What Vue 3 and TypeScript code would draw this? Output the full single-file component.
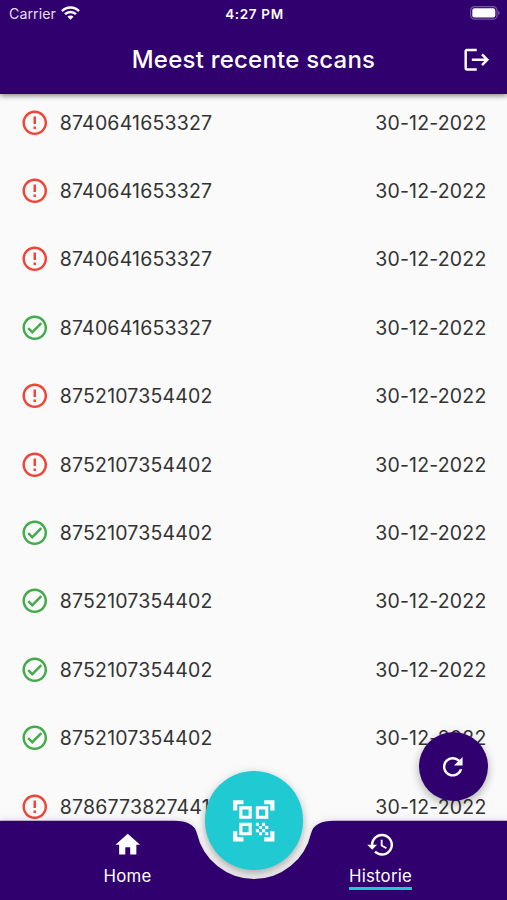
<script setup lang="ts">
type Status = 'error' | 'ok'

interface Scan {
  code: string
  date: string
  status: Status
}

const date = '30-12-2022'
const scans: Scan[] = [
  { code: '8740641653327', date, status: 'error' },
  { code: '8740641653327', date, status: 'error' },
  { code: '8740641653327', date, status: 'error' },
  { code: '8740641653327', date, status: 'ok' },
  { code: '8752107354402', date, status: 'error' },
  { code: '8752107354402', date, status: 'error' },
  { code: '8752107354402', date, status: 'ok' },
  { code: '8752107354402', date, status: 'ok' },
  { code: '8752107354402', date, status: 'ok' },
  { code: '8752107354402', date, status: 'ok' },
  { code: '8786773827441', date, status: 'error' },
]

const statusPaths: Record<Status, string> = {
  error:
    'M11 15h2v2h-2zm0-8h2v6h-2zm.99-5C6.47 2 2 6.48 2 12s4.47 10 9.99 10C17.52 22 22 17.52 22 12S17.52 2 11.99 2zM12 20c-4.42 0-8-3.58-8-8s3.58-8 8-8 8 3.58 8 8-3.58 8-8 8z',
  ok: 'M16.59 7.58L10 14.17l-2.59-2.58L6 13l4 4 8-8zM12 2C6.48 2 2 6.48 2 12s4.48 10 10 10 10-4.48 10-10S17.52 2 12 2zm0 18c-4.42 0-8-3.58-8-8s3.58-8 8-8 8 3.58 8 8-3.58 8-8 8z',
}
</script>

<template>
  <div class="app">
    <header class="header">
      <div class="status-bar">
        <div class="carrier">
          <span class="carrier-name">Carrier</span>
          <svg class="wifi" viewBox="0 0 19 14">
            <path d="M1 5.100a12 12 0 0 1 17 0M4 8.200a7.800 7.800 0 0 1 11 0" />
            <path class="wifi-dot" d="M9.500 13.800l-3-3.100a4.200 4.200 0 0 1 6 0z" />
          </svg>
        </div>
        <span class="time">4:27 PM</span>
        <div class="battery-box">
          <svg class="battery" viewBox="0 0 30 14">
            <rect class="battery-case" x=".6" y=".6" width="26.4" height="12.6" rx="4" />
            <rect class="battery-fill" x="2.300" y="2.300" width="23" height="9.200" rx="2.200" />
            <path class="battery-tip" d="M28.200 4.700c1.800.6 1.800 3.800 0 4.400z" />
          </svg>
        </div>
      </div>
      <div class="title-bar">
        <h1 class="title">Meest recente scans</h1>
        <button class="logout" aria-label="Uitloggen">
          <svg class="icon" viewBox="0 0 24 24">
            <path d="M17 7l-1.41 1.41L18.17 11H8v2h10.17l-2.58 2.58L17 17l5-5zM4 5h8V3H4c-1.1 0-2 .9-2 2v14c0 1.1.9 2 2 2h8v-2H4V5z" />
          </svg>
        </button>
      </div>
    </header>

    <main class="list">
      <div v-for="(scan, i) in scans" :key="i" class="row">
        <svg class="icon status" :class="scan.status" viewBox="0 0 24 24">
          <path :d="statusPaths[scan.status]" />
        </svg>
        <span class="code">{{ scan.code }}</span>
        <span class="date">{{ scan.date }}</span>
      </div>
    </main>

    <button class="refresh" aria-label="Vernieuwen">
      <svg class="icon" viewBox="0 0 24 24">
        <path d="M17.65 6.35C16.2 4.9 14.21 4 12 4c-4.42 0-7.99 3.58-7.99 8s3.57 8 7.99 8c3.73 0 6.84-2.55 7.73-6h-2.08c-.82 2.33-3.04 4-5.65 4-3.31 0-6-2.69-6-6s2.69-6 6-6c1.66 0 3.14.69 4.22 1.78L13 11h7V4l-2.35 2.35z" />
      </svg>
    </button>

    <nav class="nav">
      <svg class="nav-shape" viewBox="0 0 507 80">
        <path d="M0 .7H174Q194 .7 196.900 13.2A58.500 58.500 0 0 0 311.100 13.2Q314 .7 334 .7H507V80H0Z" />
      </svg>
      <a class="tab">
        <svg class="icon" viewBox="0 0 24 24"><path d="M10 20v-6h4v6h5v-8h3L12 3 2 12h3v8z" /></svg>
        <span class="tab-label">Home</span>
      </a>
      <a class="tab active">
        <svg class="icon" viewBox="0 0 24 24">
          <path d="M13 3c-4.97 0-9 4.03-9 9H1l3.89 3.89.07.14L9 12H6c0-3.87 3.13-7 7-7s7 3.13 7 7-3.13 7-7 7c-1.93 0-3.68-.79-4.94-2.06l-1.42 1.42C8.27 19.99 10.51 21 13 21c4.97 0 9-4.03 9-9s-4.03-9-9-9zm-1 5v5l4.28 2.54.72-1.21-3.5-2.08V8H12z" />
        </svg>
        <span class="tab-label">Historie</span>
      </a>
      <button class="scan" aria-label="Scannen">
        <svg class="icon" viewBox="0 0 24 24">
          <path d="M9.500 6.500v3h-3v-3h3M11 5H5v6h6V5zm-1.500 9.500v3h-3v-3h3M11 13H5v6h6v-6zm6.500-6.500v3h-3v-3h3M19 5h-6v6h6V5zm-6 8h1.500v1.500H13V13zm1.500 1.500H16V16h-1.500v-1.500zM16 13h1.500v1.500H16V13zm-3 3h1.500v1.500H13V16zm1.500 1.500H16V19h-1.500v-1.500zM16 16h1.500v1.500H16V16zm1.500-1.500H19V16h-1.500v-1.500zm0 3H19V19h-1.500v-1.500zM22 7h-2V4h-3V2h5v5zm0 15v-5h-2v3h-3v2h5zM2 22h5v-2H4v-3H2v5zM2 2v5h2V4h3V2H2z" />
        </svg>
      </button>
    </nav>
  </div>
</template>

<style>
body {
  background: #fafafa;
}
</style>

<style scoped>
.app {
  position: relative;
  display: flex;
  flex-direction: column;
  height: 900px;
  overflow: hidden;
  background: #fafafa;
  font-family: Inter, Roboto, sans-serif;
}

button {
  display: flex;
  align-items: center;
  justify-content: center;
  padding: 0;
  border: 0;
  background: none;
  color: #fff;
}

.icon {
  display: block;
  width: 29.5px;
  height: 29.5px;
  flex: none;
  fill: currentColor;
}

.header {
  position: relative;
  z-index: 1;
  flex: none;
  height: 93.700px;
  background: #31006f;
  color: #fff;
  box-shadow: 0 2px 5px rgba(0, 0, 0, 0.45);
}

.status-bar {
  display: grid;
  grid-template-columns: 1fr auto 1fr;
  align-items: center;
  height: 27px;
  padding: 0 7px 0 9px;
}

.carrier {
  display: flex;
  align-items: center;
  gap: 5px;
  color: #e6dff0;
}

.carrier-name {
  font-size: 14.200px;
  letter-spacing: 0.050px;
}

.wifi {
  width: 19px;
  height: 14px;
  margin-top: -1px;
  fill: none;
  stroke: #fff;
  stroke-width: 2.500;
}

.wifi-dot {
  fill: #fff;
  stroke: none;
}

.time {
  font-size: 13.500px;
  font-weight: 600;
  letter-spacing: 0.650px;
}

.battery-box {
  display: flex;
  justify-content: flex-end;
  margin-top: -1px;
}

.battery {
  width: 30px;
  height: 14px;
}

.battery-case {
  fill: none;
  stroke: #7a59a2;
  stroke-width: 1.200;
}

.battery-fill {
  fill: #fff;
}

.battery-tip {
  fill: #7a59a2;
}

.title-bar {
  display: grid;
  grid-template-columns: 60px 1fr 60px;
  align-items: center;
  height: 65px;
}

.title {
  grid-column: 2;
  margin: 0;
  text-align: center;
  font-size: 24px;
  font-weight: 500;
  letter-spacing: 0.220px;
  white-space: nowrap;
}

.list {
  flex: none;
  margin-top: -5.500px;
}

.row {
  display: flex;
  align-items: center;
  height: 68.400px;
  padding: 0 20.500px 0 20.200px;
  color: #333;
  font-size: 19.500px;
  letter-spacing: 0.180px;
}

.code,
.date {
  padding-top: 0.600px;
}

.status {
  margin-right: 10.100px;
}

.status.error {
  color: #f04438;
}

.status.ok {
  color: #43ab4a;
}

.date {
  margin-left: auto;
}

.refresh {
  position: absolute;
  left: 418.700px;
  top: 732.300px;
  width: 69px;
  height: 69px;
  border-radius: 50%;
  background: #31006f;
  box-shadow: 0 4px 8px rgba(0, 0, 0, 0.22), 0 1px 12px rgba(0, 0, 0, 0.1);
}

.nav {
  position: absolute;
  inset: auto 0 0;
  display: grid;
  grid-template-columns: 1fr 1fr;
  height: 80px;
  padding-left: 1px;
  color: #fff;
}

.nav-shape {
  position: absolute;
  inset: 0;
  width: 507px;
  height: 80px;
  fill: #31006f;
  filter: drop-shadow(0 -1px 3px rgba(0, 0, 0, 0.12));
}

.tab {
  position: relative;
  display: flex;
  flex-direction: column;
  align-items: center;
  padding-top: 10.300px;
}

.tab-label {
  margin-top: 7.200px;
  border-bottom: 3.500px solid transparent;
  font-size: 16.800px;
  letter-spacing: 0.200px;
  line-height: 19.800px;
}

.active .tab-label {
  border-color: #1fcad3;
}

.scan {
  position: absolute;
  left: 205px;
  top: -48.600px;
  width: 98.400px;
  height: 98.400px;
  border-radius: 50%;
  background: #1fcad3;
  box-shadow: 0 4px 7px rgba(0, 0, 0, 0.25), 0 1px 12px rgba(0, 0, 0, 0.1);
}

.scan .icon {
  width: 49.600px;
  height: 49.600px;
}
</style>
